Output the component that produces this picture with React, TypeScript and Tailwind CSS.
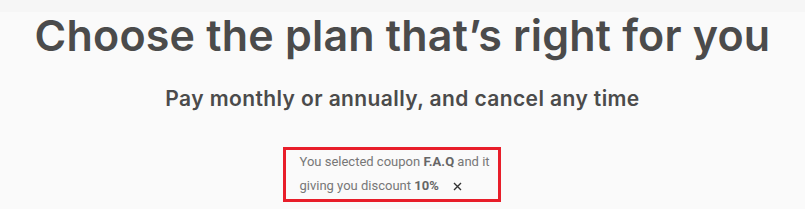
import React from "react";

export default function App() {
  return (
    <div className="w-[805px] h-[209px] bg-[#fafafa] overflow-hidden">
      <div className="h-[12px] bg-[#f6f6f6]" />
      <h1
        className="-mt-[3px] text-center text-[#4b4b4b] font-semibold text-[43px] leading-[52px] tracking-[0.2px]"
        style={{ fontFamily: "Inter, 'Noto Sans', sans-serif" }}
      >
        Choose the plan that’s right for you
      </h1>
      <p
        className="mt-[25px] text-center text-[#4b4b4b] font-semibold text-[21px] leading-[26px] tracking-[0.4px]"
        style={{ fontFamily: "Inter, 'Noto Sans', sans-serif" }}
      >
        Pay monthly or annually, and cancel any time
      </p>
      <div className="flex justify-center mt-[35px]">
        <div
          className="mr-[22px] w-[218px] border-[3px] border-[#e81e2a] pl-[14px] pr-0 pb-[1px] text-[13px] leading-[24px] text-[#777777]"
          style={{ fontFamily: "Roboto, 'Liberation Sans', sans-serif" }}
        >
          You selected coupon <b className="font-bold text-[#666666]">F.A.Q</b> and it giving you discount{" "}
          <b className="font-bold text-[#666666]">10%</b>
          <svg
            className="inline-block ml-[14px] align-[-1px]"
            width="9"
            height="9"
            viewBox="0 0 9 9"
          >
            <path d="M1 1 L8 8 M8 1 L1 8" stroke="#333" strokeWidth="1.4" />
          </svg>
        </div>
      </div>
    </div>
  );
}
